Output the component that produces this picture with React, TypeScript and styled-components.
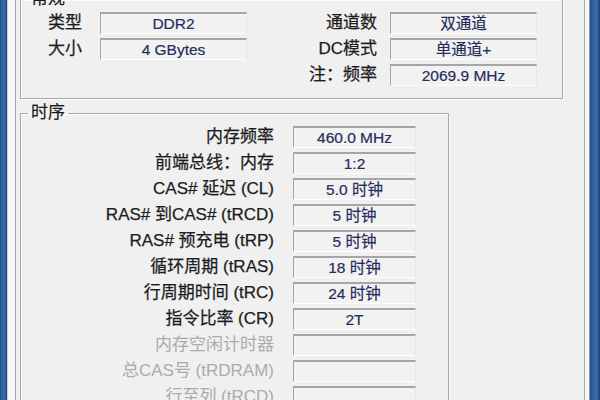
import React from 'react';
import styled, { createGlobalStyle } from 'styled-components';

const GlobalStyle = createGlobalStyle`
  html, body {
    margin: 0;
    padding: 0;
    background: #f0f0f0;
  }
`;

const Screen = styled.div`
  display: flex;
  width: 600px;
  height: 400px;
  overflow: hidden;
  font-family: "Liberation Sans", "Noto Sans CJK SC", sans-serif;
`;

const Frame = styled.div<{ $w: number }>`
  width: ${(p) => p.$w}px;
  flex-shrink: 0;
  background: linear-gradient(to right, #24508a, #3a6dab 55%, #2f5f9c 80%, #1b3a66);
`;

const Dialog = styled.div`
  flex: 1;
  display: flex;
  padding: 0 5px 0 8px;
  background: #f8f8f8;
  box-shadow: inset 1px 0 0 #c9d3df, inset -1px 0 0 #8f9aa8;
`;

const TabPage = styled.div`
  flex: 1;
  padding: 0 21px 0 4px;
  background: #f0f0f0;
  border-left: 1px solid #a7a7a7;
  border-right: 1px solid #a7a7a7;
`;

const Group = styled.fieldset<{ $width?: number; $top: number }>`
  margin: ${(p) => p.$top}px 0 0;
  padding: 4px 0 12px;
  width: ${(p) => (p.$width ? `${p.$width}px` : 'auto')};
  box-sizing: border-box;
  min-width: 0;
  border: 1px solid #a9a9a9;
  box-shadow: inset 1px 1px 0 #fbfbfb, 1px 1px 0 #fbfbfb;
`;

const Legend = styled.legend`
  margin-left: 7px;
  padding: 0 3px;
  font-size: 17px;
  line-height: 18px;
  color: #1a1a1a;
  -webkit-text-stroke: 0.2px #1a1a1a;
`;

const GeneralGrid = styled.div`
  display: grid;
  grid-template-columns: 79px 147px 143px 147px;
  grid-auto-rows: 22px;
  row-gap: 4px;
`;

const TimingGrid = styled.div`
  display: grid;
  grid-template-columns: 272px 123px;
  grid-auto-rows: 22px;
  row-gap: 4px;
`;

const Label = styled.div<{ $pad: number; $disabled?: boolean }>`
  padding-right: ${(p) => p.$pad}px;
  text-align: right;
  font-size: 17px;
  line-height: 22px;
  white-space: nowrap;
  color: ${(p) => (p.$disabled ? '#ababab' : '#1c1c1c')};
  -webkit-text-stroke: ${(p) => (p.$disabled ? '0' : '0.25px #1c1c1c')};
`;

const Value = styled.div`
  box-sizing: border-box;
  height: 22px;
  background: #f2f2f2;
  border-top: 2px solid #a6a6a6;
  border-left: 1px solid #a6a6a6;
  border-right: 1px solid #e6e6e6;
  border-bottom: 1px solid #fdfdfd;
  text-align: center;
  font-size: 15.5px;
  line-height: 19px;
  color: #262d5c;
  white-space: nowrap;
  -webkit-text-stroke: 0.2px #262d5c;
`;

const Spacer = styled.div``;

const timings: { label: string; value: string; disabled?: boolean }[] = [
  { label: '内存频率', value: '460.0 MHz' },
  { label: '前端总线：内存', value: '1:2' },
  { label: 'CAS# 延迟 (CL)', value: '5.0 时钟' },
  { label: 'RAS# 到CAS# (tRCD)', value: '5 时钟' },
  { label: 'RAS# 预充电 (tRP)', value: '5 时钟' },
  { label: '循环周期 (tRAS)', value: '18 时钟' },
  { label: '行周期时间 (tRC)', value: '24 时钟' },
  { label: '指令比率 (CR)', value: '2T' },
  { label: '内存空闲计时器', value: '', disabled: true },
  { label: '总CAS号 (tRDRAM)', value: '', disabled: true },
  { label: '行至列 (tRCD)', value: '', disabled: true },
];

const App = () => {
  return (
    <Screen>
      <GlobalStyle />
      <Frame $w={7} />
      <Dialog>
        <TabPage>
          <Group $top={-10}>
            <Legend>常规</Legend>
            <GeneralGrid>
              <Label $pad={18}>类型</Label>
              <Value>DDR2</Value>
              <Label $pad={13}>通道数</Label>
              <Value>双通道</Value>
              <Label $pad={18}>大小</Label>
              <Value>4 GBytes</Value>
              <Label $pad={13}>DC模式</Label>
              <Value>单通道+</Value>
              <Spacer />
              <Spacer />
              <Label $pad={13}>注：频率</Label>
              <Value>2069.9 MHz</Value>
            </GeneralGrid>
          </Group>
          <Group $top={5} $width={429}>
            <Legend>时序</Legend>
            <TimingGrid>
              {timings.map((t) => (
                <React.Fragment key={t.label}>
                  <Label $pad={19} $disabled={t.disabled}>
                    {t.label}
                  </Label>
                  <Value>{t.value}</Value>
                </React.Fragment>
              ))}
            </TimingGrid>
          </Group>
        </TabPage>
      </Dialog>
      <Frame $w={10} />
    </Screen>
  );
};

export default App;
